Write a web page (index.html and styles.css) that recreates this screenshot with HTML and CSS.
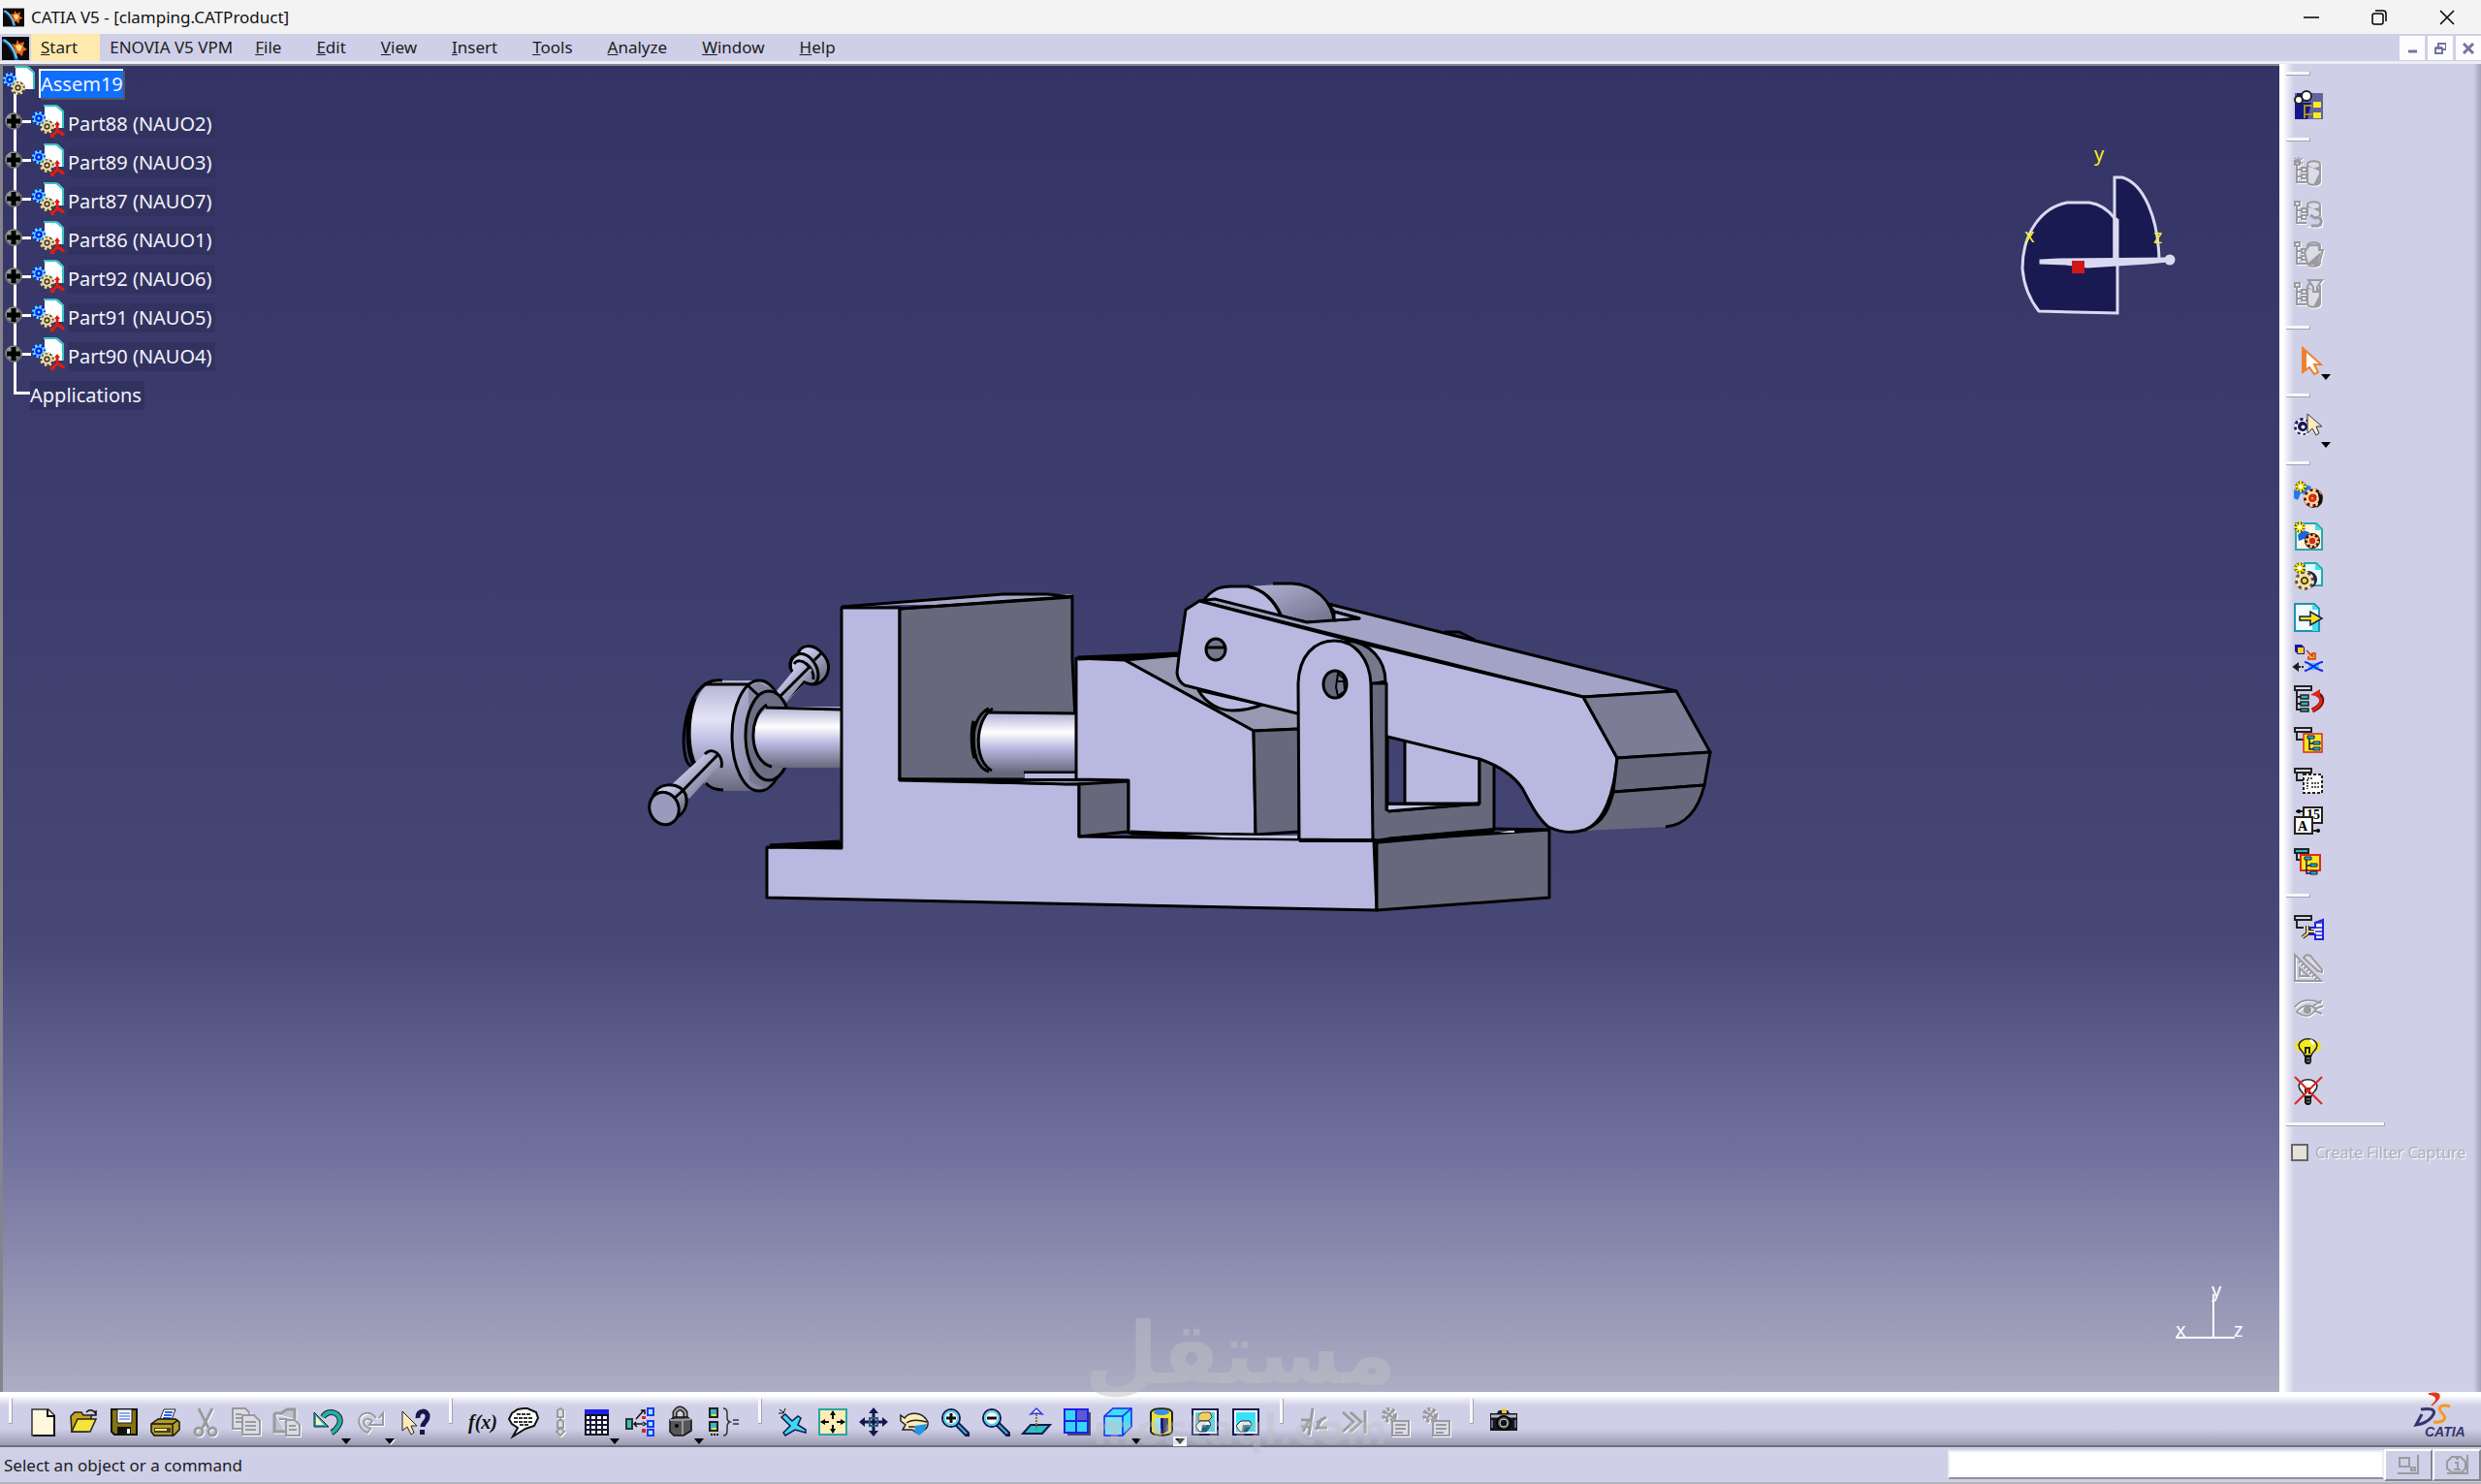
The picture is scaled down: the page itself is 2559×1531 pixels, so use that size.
FILE: index.html
```
<!DOCTYPE html>
<html lang="en">
<head>
    <meta charset="utf-8">
    <title>CATIA V5 - [clamping.CATProduct]</title>
    <link rel="stylesheet" href="styles.css">
</head>
<body>
    <!-- shared symbols -->
    <svg class="defs" width="0" height="0" aria-hidden="true">
        <symbol id="app-icon" viewBox="0 0 28 24">
            <rect width="28" height="24" fill="#0a0a0c"/>
            <path d="M1 2C9 5 15 12 17 24H13C11 14 7 8 0 5z" fill="#1b62a8"/>
            <path d="M2 3C9 7 13 13 15 22" fill="none" stroke="#6fd0f0" stroke-width="2"/>
            <path d="M10 7l4 1 2-5 2 4 5-2-1 5 4 3-4 2-1 5-4-3-3 1-1-6z" fill="#e8641a"/>
            <path d="M14 9l4-1 3 2-2 5-3-1z" fill="#ffe27a"/>
        </symbol>
        <symbol id="gear" viewBox="0 0 14 14">
            <circle cx="7" cy="7" r="5" fill="none" stroke="currentColor" stroke-width="4" stroke-dasharray="2 1.9"/>
            <circle cx="7" cy="7" r="4" fill="none" stroke="currentColor" stroke-width="2"/>
            <circle cx="7" cy="7" r="1.5" fill="currentColor"/>
        </symbol>
        <symbol id="product" viewBox="0 0 34 34">
            <path d="M13 1h14l5 5v18H20l-7-8z" fill="#fff"/>
            <path d="M12 1h13l7 6v17" fill="none" stroke="#35c4c4" stroke-width="2"/>
            <circle cx="7" cy="14" r="7" fill="#0a1fe0"/>
            <use href="#gear" x="0" y="7" width="14" height="14" color="#5ce0ff"/>
            <circle cx="7" cy="14" r="3" fill="none" stroke="#0a1fe0" stroke-width="1.5"/>
            <circle cx="16" cy="23" r="7" fill="#3a3a38"/>
            <use href="#gear" x="8" y="15" width="15" height="15" color="#eed9a0"/>
        </symbol>
        <symbol id="part" viewBox="0 0 34 34">
            <use href="#product" width="34" height="34"/>
            <path d="M26 19v8l-5 5M26 27l7 4" fill="none" stroke="#e01d10" stroke-width="3"/>
            <path d="M23 21l3-4 3 4zM19 29v5h5zM30 26v6h4z" fill="#e01d10"/>
        </symbol>
        <symbol id="plus-node" viewBox="0 0 18 18">
            <circle cx="9" cy="9" r="9" fill="#6d6d6d"/>
            <circle cx="8" cy="8" r="7" fill="#989898"/>
            <path d="M9 2v14M2 9h14" stroke="#000" stroke-width="5"/>
        </symbol>
        <symbol id="spark" viewBox="0 0 12 12">
            <path d="M6 0v12M0 6h12M2 2l8 8M10 2l-8 8" stroke="#222" stroke-width="3"/>
            <path d="M6 0v12M0 6h12M2 2l8 8M10 2l-8 8" stroke="#ffe61a" stroke-width="2"/>
            <circle cx="6" cy="6" r="2" fill="#fff"/>
        </symbol>
        <symbol id="cylinder" viewBox="0 0 30 30">
            <path d="M14 8c0-5 13-5 13 0v17c0 5-13 5-13 0z" fill="#dcdce8" stroke="#9a9a9f" stroke-width="2"/>
            <path d="M14 8c0 4 13 4 13 0v17c0 3-4 4-7 4l7-14z" fill="#9a9a9f"/>
            <path d="M3 7v19h10M3 13h6M3 20h6" fill="none" stroke="#9a9a9f" stroke-width="2"/>
            <path d="M1 4h5v4H1zM8 11h5v4H8zM8 18h5v4H8z" fill="#eee" stroke="#9a9a9f" stroke-width="2"/>
        </symbol>
        <symbol id="frame-tree" viewBox="0 0 30 30">
            <path d="M1 3h17v4H1z" fill="#dcdce8" stroke="#222" stroke-width="2"/>
            <path d="M3 7v8h7" fill="none" stroke="#222" stroke-width="2"/>
        </symbol>
        <symbol id="bulb" viewBox="0 0 30 30">
            <path d="M11 21c0-4-6-5-6-11a10 9 0 0 1 19 0c0 6-6 7-6 11z" stroke="#222" stroke-width="1.5"/>
            <path d="M12 19v-6h4v6" fill="none" stroke="#222" stroke-width="2"/>
            <path d="M11 21h7v7l-2 2h-3l-2-2z" fill="#111"/>
            <path d="M13 24h4M13 27h4" stroke="#aaa"/>
        </symbol>
        <symbol id="list-gear" viewBox="0 0 30 30">
            <circle cx="9" cy="8" r="6" fill="#dcdce8" stroke="#9a9a9f" stroke-width="4" stroke-dasharray="3 2"/>
            <path d="M4 4l12 9M5 12l9-10" stroke="#9a9a9f" stroke-width="2"/>
            <path d="M12 14h17v15H12z" fill="#dcdce8" stroke="#9a9a9f" stroke-width="2"/>
            <path d="M15 18h11M15 22h11M15 26h8" stroke="#9a9a9f" stroke-width="2"/>
        </symbol>
        <symbol id="lens" viewBox="0 0 30 30">
            <path d="M17 17l11 11" stroke="#16164f" stroke-width="6" stroke-linecap="round"/>
            <path d="M18 18l9 9" stroke="#35b8d8" stroke-width="2"/>
            <circle cx="11" cy="11" r="9" fill="#fff" stroke="#16164f" stroke-width="2"/>
            <circle cx="11" cy="11" r="7" fill="none" stroke="#4fd3e6" stroke-width="2"/>
        </symbol>
    </svg>

    <div class="app">
        <header class="title-bar">
            <svg class="title-icon"><use href="#app-icon"/></svg>
            <h1>CATIA V5 - [clamping.CATProduct]</h1>
            <div class="window-controls">
                <button aria-label="Minimize"><svg viewBox="0 0 16 16"><path d="M0 8h16"/></svg></button>
                <button aria-label="Restore"><svg viewBox="0 0 16 16"><rect x="1" y="4" width="11" height="11" rx="2"/><path d="M4 1h8a3 3 0 0 1 3 3v8"/></svg></button>
                <button aria-label="Close"><svg viewBox="0 0 16 16"><path d="M1 1l14 14M15 1L1 15"/></svg></button>
            </div>
        </header>

        <nav class="menu-bar">
            <svg class="menu-icon"><use href="#app-icon"/></svg>
            <button class="active"><u>S</u>tart</button>
            <button class="enovia">ENOVIA V5 VPM</button>
            <button><u>F</u>ile</button>
            <button><u>E</u>dit</button>
            <button><u>V</u>iew</button>
            <button><u>I</u>nsert</button>
            <button><u>T</u>ools</button>
            <button><u>A</u>nalyze</button>
            <button><u>W</u>indow</button>
            <button><u>H</u>elp</button>
            <div class="doc-controls">
                <button aria-label="Minimize document"><svg viewBox="0 0 12 12"><path d="M2 9h9" stroke-width="3"/></svg></button>
                <button aria-label="Restore document"><svg viewBox="0 0 12 12"><path d="M1 6h7v5H1zM1 5h7M4 4V1h8v6H9M4 1h8" stroke-width="2"/></svg></button>
                <button aria-label="Close document"><svg viewBox="0 0 12 12"><path d="M1 1l10 10M11 1L1 11" stroke-width="3"/></svg></button>
            </div>
        </nav>

        <div class="workspace">
            <main class="viewer">
                <svg class="scene" viewBox="3 68 2348 1368" preserveAspectRatio="xMidYMid meet">
                    <defs>
                        <linearGradient id="shaft" x1="0" y1="0" x2="0" y2="1">
                            <stop offset="0" stop-color="#aeaed4"/>
                            <stop offset=".33" stop-color="#fff"/>
                            <stop offset=".6" stop-color="#b9b8e0"/>
                            <stop offset="1" stop-color="#68687c"/>
                        </linearGradient>
                        <linearGradient id="knob" x1="0" y1="0" x2="0" y2="1">
                            <stop offset="0" stop-color="#b0b0d0"/>
                            <stop offset=".35" stop-color="#e4e3f6"/>
                            <stop offset=".6" stop-color="#b4b4da"/>
                            <stop offset="1" stop-color="#68687c"/>
                        </linearGradient>
                        <linearGradient id="cam" x1="0" y1="0" x2="1" y2="1">
                            <stop offset="0" stop-color="#b4b4d6"/>
                            <stop offset="1" stop-color="#70708a"/>
                        </linearGradient>
                        <linearGradient id="rod" x1="0" y1="0" x2="1" y2="1">
                            <stop offset=".3" stop-color="#c8c8ea"/>
                            <stop offset=".8" stop-color="#77778f"/>
                        </linearGradient>
                    </defs>

                    <g class="model">
                        <!-- handle, upper half -->
                        <path class="bare" d="M799 716L828 683L840 694L809 727z" fill="url(#rod)"/>
                        <path d="M806 726L838 695"/>
                        <path d="M823 675C826 664 839 664 848 674C858 684 856 697 846 704C838 709 825 704 818 694C813 688 815 679 823 675z" fill="url(#rod)"/>
                        <path d="M815 689C813 676 826 670 836 679C845 688 847 702 839 706M819 685C825 676 840 688 839 701M840 681L847 674" fill="none"/>
                        <path class="bare" d="M800 714L824 685L838 691L811 724z" fill="url(#rod)"/>
                        <path d="M805 718L835 688"/>

                        <!-- screw knob and shaft -->
                        <path class="bare" d="M738 702H783V816H738C704 806 702 712 738 702z" fill="url(#knob)"/>
                        <path d="M745 702C700 695 697 800 717 790M728 706H773M728 808Q734 815 746 815" fill="none"/>
                        <path d="M716 720C708 742 708 775 717 790" fill="none" stroke-width="5"/>
                        <ellipse cx="783" cy="759" rx="28" ry="57" fill="url(#cam)"/>
                        <path class="bare" d="M772 708L782 704L799 712L809 729L806 798L790 814L773 806z" fill="#68687c" opacity=".5"/>
                        <ellipse cx="793" cy="759" rx="24" ry="46" fill="#6d6d84"/>
                        <path class="bare" d="M794 729H867V792H794C772 784 772 738 794 729z" fill="url(#shaft)"/>
                        <path d="M791 727C771 739 772 785 796 791M790 730L867 732M771 707L783 718" fill="none"/>

                        <!-- handle, lower half -->
                        <path class="bare" d="M690 812L728 777L745 786L711 824z" fill="url(#rod)"/>
                        <path d="M703 817L741 778M727 778C735 769 747 780 744 792" fill="none"/>
                        <path d="M674 820C679 808 694 808 702 813C711 820 710 835 700 842z" fill="url(#rod)"/>
                        <path d="M696 823L705 815"/>
                        <ellipse cx="685" cy="834" rx="15" ry="17" transform="rotate(-20 685 834)" fill="#9a9abc"/>

                        <!-- fixed base -->
                        <path class="bare" d="M868 627L1034 613H1106V624H928z" fill="#a7a7c8"/>
                        <path class="light" d="M868 627H928V805L1113 809V863L1417 867L1420 939L791 926V874L868 875z"/>
                        <path class="dark" d="M928 628L1085 617L1106 615V680L1112 804L928 804z"/>
                        <path d="M868 626L1034 613H1081L1106 616M928 628L1034 621L1106 616" fill="none"/>
                        <path class="dark" d="M1420 868L1598 856V926L1420 939z"/>
                        <path class="light" d="M928 804L1164 805V808L1100 809z"/>
                        <path class="dark" d="M1113 809L1164 806V858L1113 863z"/>
                        <path d="M794 873L866 869M842 873L868 871" stroke-width="5"/>

                        <!-- shaft end inside the jaw -->
                        <path class="bare" d="M1022 735H1110V797H1022C1006 790 1005 744 1022 735z" fill="url(#shaft)"/>
                        <path d="M1020 731C998 740 999 790 1020 796M1024 731C1005 742 1004 786 1023 795" fill="none"/>
                        <path d="M1005 744C1002 755 1003 774 1006 782" fill="none" stroke-width="5"/>
                        <path d="M1017 735L1110 736M1056 797H1110" fill="none"/>
                        <path class="bare" d="M1057 798H1109V803H1057z" fill="#b9b8e0"/>

                        <!-- sliding block -->
                        <path d="M1160 681L1215 676L1340 715V752L1293 754z" fill="#9898b2"/>
                        <path class="light" d="M1110 679L1160 681L1293 754L1295 861L1164 859V805L1110 804z"/>
                        <path class="dark" d="M1293 754L1340 752V858L1295 861z"/>
                        <path d="M1112 679L1216 675M1166 859L1260 863" fill="none" stroke-width="5"/>
                        <path class="bare" d="M1222 861L1296 862H1338V865L1260 864z" fill="#c4c4e4"/>

                        <!-- fork bracket, rear side -->
                        <path class="light" d="M1449 760V829H1526V782z"/>
                        <path class="dark" d="M1416 690H1431V837L1526 829V780L1541 786V856L1416 867z"/>
                        <path class="bare" d="M1432 831L1526 830L1452 836L1432 837z" fill="#c4c4e4"/>
                        <path d="M1431 829L1526 830M1431 837L1526 829" fill="none"/>
                        <path d="M1417 868L1541 857" stroke-width="6"/>
                        <path class="bare" d="M1546 859L1562 856V859z" fill="#c4c4e4"/>
                        <path d="M1541 855L1598 856"/>

                        <!-- cam under and over the lever -->
                        <path class="light" d="M1236 712C1244 726 1258 733 1271 733C1283 733 1292 731 1302 727z"/>
                        <path class="light" d="M1241 620C1250 608 1258 605 1270 605H1287C1303 608 1315 621 1322 637z"/>
                        <path class="bare" d="M1287 605L1333 602C1356 603 1374 620 1376 641L1348 643L1322 636C1315 620 1303 608 1287 605z" fill="url(#cam)"/>
                        <path d="M1313 602H1333C1356 603 1374 620 1376 641L1348 642L1322 636C1315 620 1303 608 1287 605" fill="none"/>

                        <!-- clamp lever -->
                        <path d="M1237 620L1253 618L1348 642L1402 638L1376 631L1370 623L1729 713L1633 719z" fill="#a3a3c6"/>
                        <path class="light" d="M1376 631L1402 638L1376 640z"/>
                        <path d="M1490 652L1505 652L1521 660" fill="none"/>
                        <path class="light" d="M1237 620L1223 629L1216 677L1214 694Q1215 703 1222 707L1338 736L1431 760L1526 783Q1557 794 1570 813C1580 832 1587 845 1597 853Q1616 862 1635 856C1655 848 1665 817 1668 782L1633 719L1410 665z"/>
                        <path d="M1633 719L1729 713L1764 776L1668 782z" fill="#7c7c96"/>
                        <path class="dark" d="M1668 782L1764 776L1758 810L1664 817z"/>
                        <path class="bare" d="M1664 818L1758 811C1752 834 1740 851 1718 853L1635 857Q1656 848 1664 818z" fill="#68687c"/>
                        <path d="M1664 817L1758 810C1752 834 1740 851 1718 853M1635 856C1655 848 1660 833 1664 817" fill="none"/>
                        <ellipse cx="1254" cy="670" rx="10" ry="11" fill="#77778c"/>
                        <path d="M1245 668H1264"/>

                        <!-- fork bracket, front plate -->
                        <path d="M1388 661C1414 662 1429 682 1429 703L1414 706z" fill="#77778e"/>
                        <path class="dark" d="M1414 705H1430V837L1416 867z"/>
                        <path class="bare" d="M1416 830L1432 838V864L1417 866z" fill="#68687c"/>
                        <path class="light" d="M1339 705C1340 676 1356 661 1376 661C1398 661 1413 680 1414 706L1416 867L1340 866z"/>
                        <path d="M1340 867H1420" stroke-width="4"/>
                        <ellipse cx="1377" cy="706" rx="12" ry="14" fill="#68687c"/>
                        <path d="M1380 695L1386 700L1387 713L1380 718L1378 709zM1380 703H1387" fill="#77778a" stroke-width="2"/>
                    </g>

                    <!-- compass -->
                    <g class="compass">
                        <path d="M2103 321L2139 322L2184 323V227L2181 225Q2170 211 2155 209H2132C2106 214 2086 240 2086 277Q2088 302 2103 321z"/>
                        <path d="M2181 268V183H2189C2212 190 2226 226 2227 268z"/>
                        <path class="bar" d="M2105 269L2123 268L2237 267V269L2215 271L2153 275L2131 272L2105 271z"/>
                        <path class="bar" d="M2181 225L2184 227V268H2181z"/>
                        <circle cx="2238" cy="268" r="4"/>
                        <rect x="2137" y="269" width="13" height="13"/>
                        <text x="2160" y="166">y</text>
                        <text x="2088" y="250">x</text>
                        <text x="2221" y="251">z</text>
                    </g>

                    <!-- axis triad -->
                    <g class="triad">
                        <path d="M2244 1380H2305M2283 1335V1380"/>
                        <text x="2281" y="1338">y</text>
                        <text x="2244" y="1379">x</text>
                        <text x="2304" y="1379">z</text>
                    </g>
                </svg>

                <ul class="tree">
                    <li class="root">
                        <svg class="node-icon"><use href="#product"/></svg>
                        <span class="label selected">Assem19</span>
                    </li>
                    <li><button class="expander" aria-label="Expand Part88"><svg><use href="#plus-node"/></svg></button><svg class="node-icon"><use href="#part"/></svg><span class="label">Part88 (NAUO2)</span></li>
                    <li><button class="expander" aria-label="Expand Part89"><svg><use href="#plus-node"/></svg></button><svg class="node-icon"><use href="#part"/></svg><span class="label">Part89 (NAUO3)</span></li>
                    <li><button class="expander" aria-label="Expand Part87"><svg><use href="#plus-node"/></svg></button><svg class="node-icon"><use href="#part"/></svg><span class="label">Part87 (NAUO7)</span></li>
                    <li><button class="expander" aria-label="Expand Part86"><svg><use href="#plus-node"/></svg></button><svg class="node-icon"><use href="#part"/></svg><span class="label">Part86 (NAUO1)</span></li>
                    <li><button class="expander" aria-label="Expand Part92"><svg><use href="#plus-node"/></svg></button><svg class="node-icon"><use href="#part"/></svg><span class="label">Part92 (NAUO6)</span></li>
                    <li><button class="expander" aria-label="Expand Part91"><svg><use href="#plus-node"/></svg></button><svg class="node-icon"><use href="#part"/></svg><span class="label">Part91 (NAUO5)</span></li>
                    <li><button class="expander" aria-label="Expand Part90"><svg><use href="#plus-node"/></svg></button><svg class="node-icon"><use href="#part"/></svg><span class="label">Part90 (NAUO4)</span></li>
                    <li class="last"><span class="label">Applications</span></li>
                </ul>
            </main>

            <aside class="side-bar">
                <hr>
                <button aria-label="Assembly design"><svg viewBox="0 0 30 30"><path d="M1 2h29v27H1z" fill="#63639e"/><path d="M1 12h17l-4 17H1z" fill="#16168c"/><path d="M3 2h6v5H3z" fill="#16168c"/><path d="M20 11h8v6h-8zM20 22h8v6h-8z" fill="#f6ee20"/><path d="M11 28V15h8M11 24h8" fill="none" stroke="#a89018" stroke-width="2"/><circle cx="5" cy="9" r="4" fill="#fff" stroke="#222" stroke-width="2"/><circle cx="13" cy="5" r="5" fill="#fff" stroke="#222" stroke-width="2"/></svg></button>
                <hr>
                <button class="disabled" aria-label="New layer"><svg viewBox="0 0 30 30"><use href="#cylinder"/><path d="M5 0v7M1 1l8 6M9 1L1 7" stroke="#9a9a9f" stroke-width="1.5"/></svg></button>
                <button class="disabled" aria-label="Refresh layer"><svg viewBox="0 0 30 30"><use href="#cylinder"/><path d="M13 19h16v11H13z" fill="#cfcfe7"/><path d="M17 18l5 3c6-3 9 5 3 8h-7" fill="none" stroke="#9a9a9f" stroke-width="3"/></svg></button>
                <button class="disabled" aria-label="Open layer"><svg viewBox="0 0 30 30"><use href="#cylinder"/><path d="M11 14l5-7h10v5h4l-4 14H14z" fill="#dcdce8" stroke="#9a9a9f" stroke-width="2"/><path d="M28 14l-3 11H15z" fill="#9a9a9f"/></svg></button>
                <button class="disabled" aria-label="Filter layer"><svg viewBox="0 0 30 30"><use href="#cylinder"/><path d="M15 1h14l-5 7v5h-4V8z" fill="#dcdce8" stroke="#9a9a9f" stroke-width="2"/></svg></button>
                <hr>
                <button class="drop" aria-label="Select"><svg viewBox="0 0 30 30"><path d="M9 2v25l7-5 5 7 4-2-4-8h7z" fill="#fff" stroke="#f08030" stroke-width="2"/><path d="M9 2v25l4-3V6z" fill="#f08030"/></svg></button>
                <hr>
                <button class="drop" aria-label="Select component"><svg viewBox="0 0 30 30"><circle cx="9" cy="13" r="9" fill="#16164f"/><use href="#gear" x="0" y="4" width="19" height="19" color="#eeeefa"/><circle cx="9" cy="13" r="4" fill="none" stroke="#16164f" stroke-width="2"/><path d="M14 0v20l5-5 4 7 3-2-3-7h6z" fill="#fdebb8" stroke="#33334f"/></svg></button>
                <hr>
                <button aria-label="Component"><svg viewBox="0 0 30 30"><path d="M0 9l6 2 6-7 6 2-4 8-7-1-3 7-4-2z" fill="#1f7cf0"/><use href="#spark" x="1" width="12" height="12"/><circle cx="20" cy="18" r="10" fill="#5e160c"/><use href="#gear" x="10" y="8" width="19" height="19" color="#fbd9a0"/><path d="M24 9l5 7v7l-5 5 2-9z" fill="#111"/><circle cx="19" cy="18" r="4" fill="#e02818"/><circle cx="19" cy="18" r="1" fill="#f8e020"/></svg></button>
                <button aria-label="Product"><svg viewBox="0 0 30 30"><path d="M2 2h21l6 6v21H2z" fill="#fff4dc" stroke="#22a8b0" stroke-width="2"/><path d="M22 2v7h7z" fill="#40e0ee"/><path d="M4 14l5-5 7 2-3 6-8 3z" fill="#1468e8"/><use href="#spark" width="12" height="12"/><circle cx="19" cy="20" r="8" fill="#401008"/><use href="#gear" x="12" y="13" width="14" height="14" color="#f8cf90"/><circle cx="19" cy="20" r="3" fill="#e02818"/></svg></button>
                <button aria-label="Part"><svg viewBox="0 0 30 30"><path d="M11 1h12l6 6v17H11z" fill="#e2f8fa" stroke="#22a8b0" stroke-width="2"/><path d="M22 1v7h7z" fill="#40e0ee"/><circle cx="15" cy="18" r="9" fill="#20204e"/><circle cx="11" cy="19" r="10" fill="#5d4f38"/><use href="#gear" x="1" y="9" width="20" height="20" color="#f3deb0"/><circle cx="11" cy="19" r="3" fill="#f0e020" stroke="#222"/><use href="#spark" width="12" height="12"/></svg></button>
                <button aria-label="Existing component"><svg viewBox="0 0 30 30"><path d="M1 1h20l5 5v23H1z" fill="#eefcff" stroke="#2292b0" stroke-width="2"/><path d="M19 1v6h7zM19 20h6v9h-6z" fill="#40e0ee"/><path d="M6 14h11V9l12 7-12 7v-5H6z" fill="#f4e41c" stroke="#16164f" stroke-width="1.5"/></svg></button>
                <button aria-label="Existing component with positioning"><svg viewBox="0 0 30 30"><path d="M1 1h7l3 3v7H4l-3-3z" fill="#16169c"/><path d="M4 4h6v6H4z" fill="#ffd21c"/><path d="M13 7l6 6v-3h3v6h-7v-3" fill="#f8b820" stroke="#d03818" stroke-width="1.5"/><path d="M15 20h11v7H15z" fill="#40c8f8"/><path d="M11 19c5 0 13 9 19 9M11 28c6 0 12-9 19-9" fill="none" stroke="#1c28e8" stroke-width="2"/><path d="M4 21v6l-4-3zM5 24h2M8 24h2" stroke="#222" stroke-width="2"/></svg></button>
                <button aria-label="Replace component"><svg viewBox="0 0 30 30"><path d="M1 2h17v4H1z" fill="#dcdce8" stroke="#222" stroke-width="2"/><path d="M3 6v20h6M3 13h6M3 20h6" fill="none" stroke="#222" stroke-width="2"/><path d="M7 11h8v4H7zM7 18h8v4H7zM7 25h8v3H7z" fill="#28b8c0" stroke="#222" stroke-width="1.5"/><path d="M19 27c11-5 13-13 5-17" fill="none" stroke="#7a0c08" stroke-width="5"/><path d="M19 27c10-5 12-12 4-16" fill="none" stroke="#e02418" stroke-width="3"/><path d="M17 11l10-6v8z" fill="#e02418"/></svg></button>
                <button aria-label="Graph tree reordering"><svg viewBox="0 0 30 30"><use href="#frame-tree"/><path d="M10 9h19v19H10z" fill="#f4e71c" stroke="#e0281c" stroke-width="1.5"/><path d="M16 13v12h4M16 19h4" fill="none" stroke="#16164f" stroke-width="1.5"/><path d="M14 11h7v3h-7zM20 17h7v3h-7zM20 23h7v3h-7z" fill="#28b8c0" stroke="#16164f"/></svg></button>
                <button aria-label="Generate numbering"><svg viewBox="0 0 30 30"><use href="#frame-tree"/><path d="M10 9h19v19H10z" fill="#fff" stroke="#222" stroke-width="2" stroke-dasharray="3 2"/><path d="M14 14v10M18 18h8M18 22h8M14 13h6" stroke="#555" stroke-width="2" stroke-dasharray="2 1"/></svg></button>
                <button aria-label="Selective load"><svg viewBox="0 0 30 30"><path d="M10 1h19v16H10z" fill="#fff" stroke="#222" stroke-width="2"/><path d="M2 5h8M20 25h7" stroke="#222" stroke-width="2"/><circle cx="5" cy="5" r="2"/><circle cx="25" cy="25" r="2"/><text x="13" y="13" class="glyph">15</text><path d="M1 11h18v17H1z" fill="#fff" stroke="#222" stroke-width="2"/><text x="4" y="25" class="glyph">A</text></svg></button>
                <button aria-label="Manage representations"><svg viewBox="0 0 30 30"><path d="M1 2h14v4H1z" fill="#28b8c0" stroke="#222" stroke-width="2"/><path d="M3 6v7h5" fill="none" stroke="#222" stroke-width="2"/><path d="M7 8h20v16H7z" fill="#f4e71c" stroke="#e0281c" stroke-width="2"/><path d="M13 12v15h5M13 19h5" fill="none" stroke="#16164f" stroke-width="1.5"/><path d="M11 10h7v3h-7zM17 17h7v3h-7zM17 25h7v3h-7z" fill="#28b8c0" stroke="#16164f"/></svg></button>
                <hr>
                <button aria-label="Multi-instantiation"><svg viewBox="0 0 30 30"><use href="#frame-tree"/><path d="M16 22h6v5h8V7l-8 3v5h-5z" fill="#fff" stroke="#2020e0" stroke-width="2"/><path d="M23 10h6M22 15h7M22 19h7M22 23h7" stroke="#2020e0" stroke-width="1.5"/><path d="M14 13v8l-5 4M14 19h7" fill="none" stroke="#222" stroke-width="4"/><path d="M14 13v8l-5 4M14 19h7" fill="none" stroke="#e8d080" stroke-width="2"/></svg></button>
                <button class="disabled" aria-label="Measure"><svg viewBox="0 0 30 30"><path d="M1 1v27h27zM6 15v8h9z" fill="none" stroke="#9a9a9f" stroke-width="2"/><path d="M5 8l19 19" stroke="#9a9a9f" stroke-width="3" stroke-dasharray="2 2"/><path d="M10 4l3-3 4 1 12 14v3l-4-1z" fill="#dcdce8" stroke="#9a9a9f" stroke-width="2"/></svg></button>
                <button class="disabled" aria-label="Visualization"><svg viewBox="0 0 30 30"><path d="M1 13C7 5 17 4 28 9M3 18c6-8 14-8 20-3-5 8-12 9-20 3z" fill="none" stroke="#9a9a9f" stroke-width="2"/><circle cx="14" cy="16" r="4" fill="#9a9a9f"/><path d="M20 12l9-6M21 15l9-3M22 17l7 3" stroke="#9a9a9f" stroke-width="2"/></svg></button>
                <button aria-label="Light on"><svg viewBox="0 0 30 30"><path d="M5 5Q-3 11 6 18zM24 5q8 6 0 13z" fill="#f4e71c"/><use href="#bulb" fill="#f4ea1c"/><path d="M17 5l4 4" stroke="#fff" stroke-width="3"/></svg></button>
                <button aria-label="Light off"><svg viewBox="0 0 30 30"><use href="#bulb" fill="#fff"/><path d="M1 1l28 28M29 1L1 29" stroke="#e0241c" stroke-width="2"/></svg></button>
                <hr class="wide">
                <label class="capture"><input type="checkbox" disabled><span>Create Filter Capture</span></label>
            </aside>
        </div>

        <div class="tool-bar">
            <hr>
            <button aria-label="New"><svg viewBox="0 0 30 30"><path d="M4 2h17l6 6v21H4z" fill="#fff8dc" stroke="#333" stroke-width="1.5"/><path d="M20 2v7h7M27 8v21H5" fill="none" stroke="#111" stroke-width="2"/></svg></button>
            <button aria-label="Open"><svg viewBox="0 0 30 30"><path d="M2 9l4-4h7l2 3h8v6L18 25H3z" fill="#c8a418" stroke="#222" stroke-width="1.5"/><path d="M3 25l6-13h19l-6 13z" fill="#f6e43c" stroke="#222" stroke-width="1.5"/><path d="M18 5c4-4 8-2 10 2M28 3v5h-5" fill="none" stroke="#111" stroke-width="1.5"/></svg></button>
            <button aria-label="Save"><svg viewBox="0 0 30 30"><path d="M2 2h26v26H5l-3-3z" fill="#857412" stroke="#111" stroke-width="2"/><path d="M8 2h15v14H8z" fill="#fff" stroke="#222"/><path d="M10 6h11M10 9h11M10 12h11" stroke="#5e90e8" stroke-width="1.5"/><path d="M8 20h14v8H8z" fill="#111"/><path d="M18 22h3v5h-3z" fill="#fff"/></svg></button>
            <button aria-label="Print"><svg viewBox="0 0 30 30"><path d="M9 15L14 2h12l-5 13z" fill="#fff" stroke="#222"/><path d="M15 5h8M14 8h8M13 11h8" stroke="#2c60f0" stroke-width="2"/><path d="M1 17l7-5h18l4 3v8l-6 6H4l-3-4z" fill="#b49c28" stroke="#111" stroke-width="1.5"/><path d="M1 17h22l6-4M23 17v12" fill="none" stroke="#111" stroke-width="1.5"/><path d="M4 21h17v5H4z" fill="#42412c"/><path d="M5 23h12" stroke="#f8e86c" stroke-width="2"/></svg></button>
            <button class="disabled" aria-label="Cut"><svg viewBox="0 0 30 30"><path d="M8 1l10 20M22 1L12 21" stroke="#9a9a9f" stroke-width="3"/><circle cx="8" cy="25" r="4" fill="none" stroke="#9a9a9f" stroke-width="3"/><circle cx="22" cy="25" r="4" fill="none" stroke="#9a9a9f" stroke-width="3"/></svg></button>
            <button class="disabled" aria-label="Copy"><svg viewBox="0 0 30 30"><path d="M1 1h13l4 4v17H1z" fill="#dcdce8" stroke="#9a9a9f" stroke-width="2"/><path d="M11 8h12l6 6v14H11z" fill="#dcdce8" stroke="#9a9a9f" stroke-width="2"/><path d="M4 7h6M4 11h6M4 15h6M14 15h11M14 19h11M14 23h11" stroke="#9a9a9f" stroke-width="2"/></svg></button>
            <button class="disabled" aria-label="Paste"><svg viewBox="0 0 30 30"><path d="M2 6h7l6-4h8v10M2 6v19h11" fill="#c2c2d0" stroke="#9a9a9f" stroke-width="3"/><path d="M14 13h9l5 5v11H14z" fill="#dcdce8" stroke="#9a9a9f" stroke-width="2"/><path d="M17 19h7M17 23h8M7 12h8" stroke="#9a9a9f" stroke-width="2"/></svg></button>
            <button class="drop" aria-label="Undo"><svg viewBox="0 0 30 30"><path d="M10 10C17-1 33 8 26 19q-3 5-7 7" fill="none" stroke="#222" stroke-width="6"/><path d="M10 10C17-1 33 8 26 19q-3 5-7 7" fill="none" stroke="#22b0a8" stroke-width="4"/><path d="M1 5v15h15z" fill="#22b0a8" stroke="#222"/><path d="M3 9v9h8z" fill="#fff0c0"/></svg></button>
            <button class="drop disabled" aria-label="Redo"><svg viewBox="0 0 30 30"><path d="M20 11C12 0-3 8 4 20q3 5 7 6l3-4C3 19 7 7 16 14l-3 4h14V6l-4 5" fill="none" stroke="#9a9a9f" stroke-width="2"/></svg></button>
            <button aria-label="What's this?"><svg viewBox="0 0 30 30"><path d="M2 4v20l5-4 4 8 3-2-3-7h6z" fill="#fdebb8" stroke="#222"/><path d="M18 11c-1-9 11-9 10-1 0 5-5 5-5 10" fill="none" stroke="#16164f" stroke-width="5"/><path d="M20 23h5v5h-5z" fill="#16164f"/></svg></button>
            <hr>
            <button aria-label="Formula"><span class="fx">f(x)</span></button>
            <button aria-label="Comment"><svg viewBox="0 0 30 30"><path d="M15 1h4l9 4 2 6-4 8-9 3-13 8 5-9-6-4-3-5 3-6 6-4z" fill="#fff" stroke="#111" stroke-width="2"/><path d="M8 7h14M5 11h19M5 15h19M11 18h9" stroke="#333" stroke-width="2" stroke-dasharray="4 1"/></svg></button>
            <button class="narrow disabled" aria-label="Link"><svg viewBox="0 0 30 30"><path d="M12 3l3-2 3 2v7h-6zM12 15l3-3 3 3v6h-6zM15 21l4 4-4 4-4-4z" fill="#dcdce8" stroke="#9a9a9f" stroke-width="2"/></svg></button>
            <button class="drop" aria-label="Design table"><svg viewBox="0 0 30 30"><path d="M3 2h25v5H3z" fill="#1c20f0"/><path d="M4 8h23v20H4z" fill="#fff" stroke="#111" stroke-width="2"/><path d="M4 13h23M4 18h23M4 23h23M9 8v20M15 8v20M21 8v20" stroke="#16163a" stroke-width="2"/></svg></button>
            <button aria-label="Relations"><svg viewBox="0 0 30 30"><path d="M1 12h6v10H1z" fill="#35c4c4" stroke="#333" stroke-width="2"/><path d="M9 17h9M11 12l8-9M16 3h4v4M11 15l-2 2 3 3M18 15l3 2-3 2" fill="none" stroke="#111" stroke-width="1.5"/><path d="M23 1h6v7h-6zM23 14h6v6h-6zM23 23h6v6h-6z" fill="#9cecff" stroke="#2038f8" stroke-width="2"/><path d="M17 9h4v3h-4zM17 22h4v4h-4z" fill="#e02020"/></svg></button>
            <button class="drop" aria-label="Lock"><svg viewBox="0 0 30 30"><path d="M9 12V5q5-8 11 0v7" fill="none" stroke="#222" stroke-width="5"/><path d="M9 12V5q5-8 11 0v7" fill="none" stroke="#a0a0a0" stroke-width="2"/><path d="M4 13l5-3h13l4 3v11l-8 5H8l-4-4z" fill="#55555a" stroke="#111" stroke-width="1.5"/><path d="M4 13h13l9-1M17 13v15" fill="none" stroke="#999" stroke-width="2"/><circle cx="11" cy="19" r="2"/></svg></button>
            <button aria-label="Equivalent dimensions"><svg viewBox="0 0 30 30"><path d="M0 1h8v9H0zM0 15h8v9H0z" fill="#35b8c4" stroke="#222" stroke-width="2"/><path d="M2 8h5M2 22h5" stroke="#f0e020" stroke-width="2"/><path d="M1 28h9" stroke="#111" stroke-width="2" stroke-dasharray="2 1"/><path d="M14 1q4 0 4 5v5q0 3 3 4-3 1-3 5v4q0 5-4 5M24 13h6M24 17h6" fill="none" stroke="#333" stroke-width="1.5"/></svg></button>
            <hr>
            <button aria-label="Fly mode"><svg viewBox="0 0 30 30"><path d="M4 10l4-3 7 7 6-5 3 2-3 7 8 5v3l-11-3-10 6-2-3 7-7z" fill="#40d8ee" stroke="#16164f" stroke-width="1.5"/><path d="M2 2l5 4M1 6h5M8 1L6 6" stroke="#111"/></svg></button>
            <button aria-label="Fit all in"><svg viewBox="0 0 30 30"><path d="M1 2h28v26H1z" fill="#fdecb8" stroke="#28a8a0" stroke-width="2"/><path d="M15 4v8M15 18v8M3 15h8M19 15h8" stroke="#111" stroke-width="2"/><path d="M12 8l3-5 3 5zM12 22l3 5 3-5zM7 12l-5 3 5 3zM23 12l5 3-5 3z"/></svg></button>
            <button aria-label="Pan"><svg viewBox="0 0 30 30"><path d="M15 2v26M2 15h26" stroke="#16164f" stroke-width="3"/><path d="M10 6l5-6 5 6zM10 24l5 6 5-6zM6 10l-6 5 6 5zM24 10l6 5-6 5z" fill="#16164f"/><path d="M11 11h8v8h-8z" fill="none" stroke="#2b6078" stroke-width="2"/></svg></button>
            <button aria-label="Rotate"><svg viewBox="0 0 30 30"><path d="M1 8l4 3c4-6 18-8 24 4 1 6-5 11-12 11l-4-3H3l3-5-5-4z" fill="#fdebb8" stroke="#222" stroke-width="1.5"/><path d="M7 16c5-4 14-3 21-1M9 20h11" fill="none" stroke="#222" stroke-width="1.5"/><path d="M15 19l13-2-3 8-5 4-4-3z" fill="#2098e8"/></svg></button>
            <button aria-label="Zoom in"><svg viewBox="0 0 30 30"><use href="#lens"/><path d="M11 6v10M6 11h10" stroke="#111" stroke-width="3"/></svg></button>
            <button aria-label="Zoom out"><svg viewBox="0 0 30 30"><use href="#lens"/><path d="M6 11h10" stroke="#111" stroke-width="3"/></svg></button>
            <button aria-label="Normal view"><svg viewBox="0 0 30 30"><path d="M9 18h20l-8 9H1z" fill="#28c0c4" stroke="#16164f" stroke-width="2"/><path d="M15 7v16" stroke="#8a7a30" stroke-width="2" stroke-dasharray="2 1"/><path d="M9 7l6-6 6 6-6-1z" fill="#fff" stroke="#3438e0" stroke-width="1.5"/></svg></button>
            <button aria-label="Multi-view"><svg viewBox="0 0 30 30"><path d="M5 5h24v24H5z" fill="#4a4a68"/><path d="M2 2h24v24H2z" fill="#38d4f8" stroke="#1c20e8" stroke-width="2"/><path d="M15 3h10v10H15z" fill="#6058d8"/><path d="M14 2v24M2 14h24" stroke="#1c20e8" stroke-width="2"/></svg></button>
            <button class="drop" aria-label="Isometric view"><svg viewBox="0 0 30 30"><path d="M1 9l9-8h19v19l-9 9H1z" fill="#38e0f8" stroke="#1c20f0" stroke-width="1.5"/><path d="M1 9h19v20M20 9l9-8" fill="none" stroke="#1c20f0" stroke-width="1.5"/><path d="M2 10h17v18H2z" fill="#88dcec"/></svg></button>
            <button class="drop lit" aria-label="Shading"><svg viewBox="0 0 30 30"><path d="M4 5c2-5 20-5 22 0v20c-2 5-20 5-22 0z" fill="#f4e030" stroke="#222" stroke-width="2"/><ellipse cx="15" cy="5" rx="8" ry="3" fill="#3490e8"/><path d="M8 11h14v15H8z" fill="#9ce4ec"/><path d="M14 11h3v16h-3z" fill="#16168c"/><path d="M17 11h5v13l-5 3z" fill="#556"/></svg></button>
            <button aria-label="Hide/Show"><svg viewBox="0 0 30 30"><path d="M2 2h26v26H2z" fill="#fff" stroke="#16164f" stroke-width="2"/><path d="M5 5h20v20H5z" fill="#58d4e8"/><path d="M8 8l4-3h8l2 5-4 4H8z" fill="#f0d060" stroke="#444"/><path d="M5 19l5-5h9l2 4-5 7H9z" fill="#fff" stroke="#222"/><path d="M12 18h8l-4 7h-5z" fill="#206878"/></svg></button>
            <button aria-label="Swap visible space"><svg viewBox="0 0 30 30"><path d="M2 2h26v26H2z" fill="#fff" stroke="#16164f" stroke-width="2"/><path d="M5 5h20v20H5z" fill="#38e0f8"/><path d="M5 19l5-5h9l2 4-5 7H9z" fill="#fff" stroke="#222"/><path d="M12 18h8l-4 7h-5z" fill="#206878"/></svg></button>
            <hr>
            <button class="disabled" aria-label="Break link"><svg viewBox="0 0 30 30"><path d="M14 1l-4 28M2 13h8l-6 12M18 16l10-6M19 21h10M2 20h9M24 11l-7 12" fill="none" stroke="#9a9a9f" stroke-width="3"/></svg></button>
            <button class="disabled" aria-label="Go to end"><svg viewBox="0 0 30 30"><path d="M3 5l11 10L3 25M11 5l11 10-11 10M26 3v24" fill="none" stroke="#9a9a9f" stroke-width="3"/></svg></button>
            <button class="disabled" aria-label="Product list"><svg viewBox="0 0 30 30"><use href="#list-gear"/></svg></button>
            <button class="disabled" aria-label="Component list"><svg viewBox="0 0 30 30"><use href="#list-gear"/></svg></button>
            <hr>
            <button aria-label="Capture"><svg viewBox="0 0 30 30"><path d="M1 6h7l2-3h9l2 3h8v18H1z" fill="#16161e"/><path d="M2 9h26" stroke="#b8b8c8" stroke-width="3"/><path d="M13 2h5v4h-5z" fill="#e8c820"/><circle cx="15" cy="16" r="7" fill="#555" stroke="#000" stroke-width="2"/><circle cx="15" cy="16" r="4" fill="#111" stroke="#ddd"/><path d="M3 13v8M27 13v8" stroke="#67678a" stroke-width="2"/></svg></button>
            <svg class="brand" viewBox="0 0 60 48">
                <path d="M15 2c13-3 15 3 3 12 7-6 7-10-3-12z" fill="#e2381c" stroke="#e2381c" stroke-width="1.5"/>
                <path d="M37 15c-11-3-13 2-8 7s3 10-9 9" fill="none" stroke="#f59a20" stroke-width="3"/>
                <path d="M7 18c14-2 16 2 11 8-4 5-9 7-16 8l6-11" fill="none" stroke="#34346e" stroke-width="3"/>
                <text x="11" y="46">CATIA</text>
            </svg>
        </div>

        <footer class="status-bar">
            <span class="message">Select an object or a command</span>
            <input type="text" aria-label="Power input">
            <button aria-label="Dialog"><svg viewBox="0 0 26 22"><path d="M4 4h10v9H4z" fill="none" stroke="#9a9aa2" stroke-width="2"/><path d="M23 1v19H2M16 14h4v3h-4z" fill="none" stroke="#9a9aa2" stroke-width="2"/></svg></button>
            <button aria-label="Information"><svg viewBox="0 0 26 22"><path d="M8 3h9l5 5v7l-4 4H8l-5-4V8zM24 1v19H3" fill="none" stroke="#9a9aa2" stroke-width="2"/><path d="M11 9h3v6M10 16h7M12 5h3" fill="none" stroke="#9a9aa2" stroke-width="2"/></svg></button>
        </footer>

        <div class="watermark">
            <span class="mark" lang="ar" dir="rtl">مستقل</span>
            <span class="site">mostaql.com</span>
        </div>
    </div>
</body>
</html>
```
FILE: styles.css
```
* {
    box-sizing: border-box;
}
html, body {
    height: 100%;
    margin: 0;
}
body {
    font-family: "Noto Sans", "Open Sans", sans-serif;
    font-size: 17px;
    color: #1c1c24;
    overflow: hidden;
}
button {
    background: none;
    border: none;
    padding: 0;
    color: inherit;
    font: inherit;
}
.defs {
    position: absolute;
}
.app {
    position: relative;
    display: flex;
    flex-direction: column;
    height: 100%;
    background: #cfcfe7;
}

/* title bar */
.title-bar {
    display: flex;
    align-items: center;
    height: 35px;
    padding-left: 3px;
    background: #f3f3f3;
}
.title-icon {
    width: 22px;
    height: 20px;
    margin-right: 7px;
}
.title-bar h1 {
    margin: 0;
    color: #111;
    font-size: 17px;
    font-weight: normal;
}
.window-controls {
    display: flex;
    margin-left: auto;
}
.window-controls button {
    width: 70px;
    height: 35px;
}
.window-controls svg {
    display: block;
    width: 16px;
    height: 16px;
    margin: 0 auto;
    fill: none;
    stroke: #000;
    stroke-width: 1.5;
}

/* menu bar */
.menu-bar {
    display: flex;
    height: 31px;
    border-bottom: 3px solid #ededf6;
}
.menu-icon {
    width: 28px;
    height: 24px;
    margin: 3px 2px 0;
}
.menu-bar button {
    height: 28px;
    padding: 0 26px 0 10px;
    line-height: 28px;
}
.menu-bar .active {
    padding-right: 23px;
    background: #ffe9ac;
}
.menu-bar .enovia {
    padding-right: 13px;
}
.doc-controls {
    display: flex;
    gap: 3px;
    margin-left: auto;
    padding: 2px 0 1px;
}
.menu-bar .doc-controls button {
    width: 26px;
    height: 25px;
    padding: 0;
    background: #fdfdff;
}
.doc-controls svg {
    display: block;
    width: 12px;
    height: 12px;
    margin: 0 auto;
    fill: none;
    stroke: #74749c;
}

/* work area */
.workspace {
    flex: 1;
    display: flex;
    min-height: 0;
}
.viewer {
    position: relative;
    flex: 1;
    border-top: 2px solid #84848a;
    border-left: 3px solid #84848a;
    background: linear-gradient(#333366, #3e3e6e 40%, #484876 66%, #7474a0 83%, #adadc4);
}
.scene {
    position: absolute;
    top: 0;
    left: 0;
    width: 100%;
    height: 100%;
}
.model {
    stroke: #000;
    stroke-width: 3;
    stroke-linejoin: round;
}
.model .bare {
    stroke: none;
}
.model .light {
    fill: #b9b8e0;
}
.model .dark {
    fill: #68687c;
}
.compass path, .compass circle {
    fill: #1a1a52;
    stroke: #d9d9f0;
    stroke-width: 3;
}
.compass .bar, .compass circle {
    fill: #d9d9f0;
}
.compass rect {
    fill: #d01818;
}
.compass text {
    fill: #f6f018;
    font-size: 20px;
}
.triad path {
    stroke: #fff;
    stroke-width: 2;
}
.triad text {
    fill: #fff;
    font-size: 20px;
}

/* specification tree */
.tree {
    position: relative;
    width: 260px;
    margin: 0;
    padding: 0;
    list-style: none;
    color: #f2f2fa;
    font-size: 20px;
}
.tree li {
    display: flex;
    align-items: center;
    height: 40px;
    padding-left: 2px;
    background:
        linear-gradient(#fff, #fff) 11px 0 / 3px 100% no-repeat,
        linear-gradient(#fff, #fff) 11px 16px / 18px 3px no-repeat;
}
.tree .root {
    padding-left: 0;
    background: linear-gradient(#fff, #fff) 11px 100% / 3px 50% no-repeat;
}
.tree .last {
    padding-left: 28px;
    background:
        linear-gradient(#fff, #fff) 11px 0 / 3px 19px no-repeat,
        linear-gradient(#fff, #fff) 11px 16px / 18px 3px no-repeat;
}
.expander {
    width: 18px;
    height: 18px;
    margin: 0 10px 6px 0;
}
.expander svg {
    display: block;
    width: 18px;
    height: 18px;
}
.node-icon {
    width: 34px;
    height: 34px;
    margin: 0 3px 6px 0;
}
.label {
    padding-right: 3px;
    background: #323261;
    line-height: 30px;
}
.label.selected {
    padding: 0;
    border-top: 2px solid #fff;
    border-left: 2px solid #fff;
    background: #0f6efc;
    box-shadow: 2px 2px 0 #55555c;
    line-height: 28px;
    margin-bottom: 4px;
}

/* right toolbar */
.side-bar {
    display: flex;
    flex-direction: column;
    align-items: flex-start;
    width: 208px;
    padding: 8px 0 0 7px;
    background: linear-gradient(to right, #fff 4px, #ececf6 8px, #cfcfe7 15px, #cfcfe7 calc(100% - 8px), #a3a3bb);
}
hr {
    flex: none;
    margin: 0;
    border: none;
    background: #f8f8fc;
    border-right: 1px solid #a4a4ae;
    border-bottom: 1px solid #a4a4ae;
}
.side-bar hr {
    width: 25px;
    height: 4px;
    margin: 12px 0 10px;
}
.side-bar hr:first-child {
    margin-top: 0;
}
.side-bar .wide {
    width: 102px;
}
.side-bar button, .tool-bar button {
    position: relative;
    flex: none;
    display: flex;
    align-items: center;
    justify-content: center;
    width: 42px;
    height: 42px;
}
.side-bar button svg, .tool-bar button svg {
    width: 30px;
    height: 30px;
    overflow: visible;
}
.side-bar .drop {
    height: 44px;
}
.side-bar button {
    padding-left: 4px;
}
.drop::after {
    content: "";
    position: absolute;
    right: -4px;
    bottom: 2px;
    border: 5px solid transparent;
    border-top: 6px solid #000;
    border-bottom: none;
}
.disabled {
    filter: drop-shadow(1px 1px 0 #fff);
}
.glyph {
    font: bold 14px "Liberation Serif", serif;
}
.capture {
    display: flex;
    align-items: center;
    margin: 6px 0 0 5px;
    color: #aeaeb8;
    font-size: 16px;
    text-shadow: 1px 1px 0 #fff;
    white-space: nowrap;
}
.capture input {
    appearance: none;
    width: 18px;
    height: 18px;
    margin: 0 7px 0 0;
    border: 2px solid #66666e;
    background: #e6e0d8;
}

/* bottom toolbar */
.tool-bar {
    display: flex;
    align-items: flex-start;
    height: 57px;
    padding-top: 10px;
    border-bottom: 2px solid #6c6c78;
    background: linear-gradient(#fff 4px, #e4e4f2 9px, #cfcfe7 15px, #cfcfe7 38px, #9a9ab2);
}
.tool-bar hr {
    width: 4px;
    height: 26px;
    margin: -3px 10px 0 14px;
}
.tool-bar hr:first-child {
    margin-left: 9px;
}
.tool-bar .drop {
    width: 45px;
    padding-right: 3px;
}
.tool-bar .narrow {
    width: 33px;
}
.tool-bar .drop::after {
    right: 0;
    bottom: -2px;
}
.tool-bar .lit::before {
    content: "";
    position: absolute;
    right: -2px;
    bottom: -4px;
    width: 14px;
    height: 10px;
    background: #fff;
}
.fx {
    color: #111;
    font: italic bold 20px "Liberation Serif", serif;
}
.brand {
    width: 60px;
    height: 48px;
    margin: -10px 9px 0 auto;
    overflow: visible;
}
.brand text {
    fill: #34346e;
    font: italic bold 14px "Liberation Sans", sans-serif;
}

/* status bar */
.status-bar {
    display: flex;
    align-items: center;
    height: 38px;
    padding-left: 4px;
    border-bottom: 2px solid #b4b4b8;
}
.status-bar input {
    width: 450px;
    height: 30px;
    margin-left: auto;
    border: 2px solid;
    border-color: #ececf4 #ececf4 #90909a #ececf4;
    background: #fff;
}
.status-bar button {
    display: flex;
    align-items: center;
    justify-content: center;
    width: 50px;
    height: 33px;
    border: 2px solid;
    border-color: #fff #85858e #85858e #fff;
}
.status-bar svg {
    width: 26px;
    height: 22px;
}

/* watermark over the lower edge of the viewer */
.watermark {
    position: absolute;
    left: 0;
    right: 0;
    bottom: 30px;
    display: flex;
    flex-direction: column;
    align-items: center;
    color: rgba(190, 190, 196, 0.5);
    font-family: "DejaVu Sans", sans-serif;
    font-weight: bold;
    pointer-events: none;
}
.watermark .mark {
    font-size: 88px;
    line-height: 108px;
}
.watermark .site {
    font-size: 42px;
    line-height: 50px;
    opacity: 0.8;
}
```
